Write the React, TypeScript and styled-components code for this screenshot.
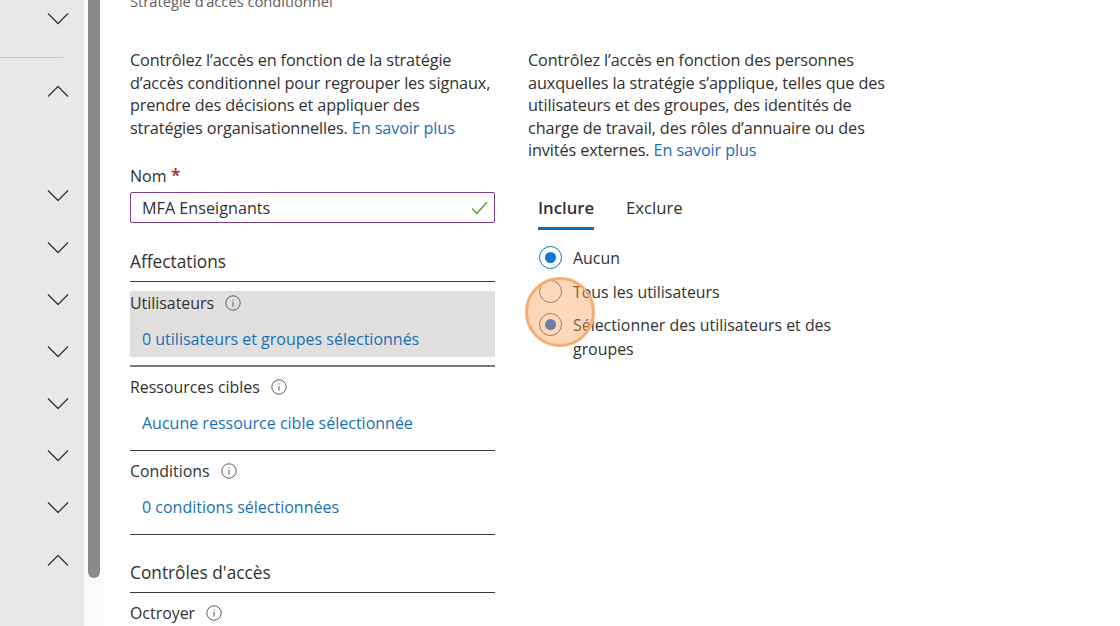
import React from "react";
import styled, { createGlobalStyle } from "styled-components";

const Global = createGlobalStyle`
html, body { margin: 0; padding: 0; background: #fff; }
body { font-family: "Open Sans", "Noto Sans", "Liberation Sans", sans-serif; color: #323130; }
`;

const chevrons = [
  { up: false, h: 25 },
  { up: true, h: 73 },
  { up: false, h: 104 },
  { up: false, h: 52 },
  { up: false, h: 52 },
  { up: false, h: 52 },
  { up: false, h: 52 },
  { up: false, h: 52 },
  { up: false, h: 52 },
  { up: true, h: 53 },
];

const Chevron = ({ up }: { up: boolean }) => (
  <svg width="22" height="13" viewBox="0 0 22 13" fill="none" stroke="#3b3a39" strokeWidth="1.4">
    <path d={up ? "M1 11.5 L11 1.5 L21 11.5" : "M1 1.5 L11 11.5 L21 1.5"} />
  </svg>
);

const Info = () => (
  <svg width="16" height="16" viewBox="0 0 16 16" fill="none" stroke="#605e5c">
    <circle cx="8" cy="8" r="7.2" strokeWidth="1" />
    <path d="M8 7 V11.6" strokeWidth="1.1" />
    <path d="M8 4.4 V5.6" strokeWidth="1.2" />
  </svg>
);

const CheckMark = () => (
  <svg width="17" height="14" viewBox="0 0 16 13" fill="none" stroke="#5ea32f" strokeWidth="1.4">
    <path d="M1 7 L5.5 11.5 L15 1" />
  </svg>
);

export default function App() {
  return (
    <Page>
      <Global />
      <Sidebar>
        {chevrons.map((c, i) => (
          <ChevronRow key={i} $h={c.h}>
            <Chevron up={c.up} />
          </ChevronRow>
        ))}
        <SideLine />
      </Sidebar>
      <Track>
        <Thumb />
      </Track>
      <Main>
        <Crumb>Stratégie d’accès conditionnel</Crumb>
        <Columns>
          <LeftCol>
            <Para>
              Contrôlez l’accès en fonction de la stratégie d’accès conditionnel pour regrouper les signaux, prendre des
              décisions et appliquer des stratégies organisationnelles. <Link>En savoir plus</Link>
            </Para>
            <FieldLabel>
              Nom <Star>*</Star>
            </FieldLabel>
            <NameInput>
              <span>MFA Enseignants</span>
              <CheckMark />
            </NameInput>
            <SectionTitle>Affectations</SectionTitle>
            <Rule />
            <ActiveBlock>
              <BlockLabel>
                Utilisateurs <Info />
              </BlockLabel>
              <BlockValue>0 utilisateurs et groupes sélectionnés</BlockValue>
            </ActiveBlock>
            <Rule $soft />
            <Block>
              <BlockLabel>
                Ressources cibles <Info />
              </BlockLabel>
              <BlockValue>Aucune ressource cible sélectionnée</BlockValue>
            </Block>
            <Rule />
            <Block>
              <BlockLabel>
                Conditions <Info />
              </BlockLabel>
              <BlockValue>0 conditions sélectionnées</BlockValue>
            </Block>
            <Rule />
            <SectionTitle $second>Contrôles d'accès</SectionTitle>
            <Rule />
            <Block>
              <BlockLabel>
                Octroyer <Info />
              </BlockLabel>
            </Block>
          </LeftCol>
          <RightCol>
            <Para>
              Contrôlez l’accès en fonction des personnes auxquelles la stratégie s’applique, telles que des utilisateurs
              et des groupes, des identités de charge de travail, des rôles d’annuaire ou des invités externes.{" "}
              <Link>En savoir plus</Link>
            </Para>
            <Tabs>
              <Tab $active>Inclure</Tab>
              <Tab>Exclure</Tab>
            </Tabs>
            <Radios>
              <RadioRow>
                <Radio $state="on" />
                <span>Aucun</span>
              </RadioRow>
              <RadioRow>
                <Radio />
                <span>Tous les utilisateurs</span>
              </RadioRow>
              <RadioRow>
                <Radio $state="pressed" />
                <span>Sélectionner des utilisateurs et des groupes</span>
              </RadioRow>
              <ClickMark />
            </Radios>
          </RightCol>
        </Columns>
      </Main>
    </Page>
  );
}

const Page = styled.div`
  width: 1120px;
  height: 626px;
  display: flex;
  overflow: hidden;
  background: #fff;
`;

const Sidebar = styled.div`
  width: 84px;
  flex: none;
  background: #e8e8e8;
  position: relative;
`;

const ChevronRow = styled.div<{ $h: number }>`
  height: ${(p) => p.$h}px;
  display: flex;
  justify-content: flex-end;
  align-items: flex-end;
  padding-right: 15px;
  box-sizing: border-box;
`;

const SideLine = styled.div`
  position: absolute;
  left: 0;
  top: 57px;
  width: 63px;
  height: 1px;
  background: #c8c6c4;
`;

const Track = styled.div`
  width: 20px;
  flex: none;
  background: #fafafa;
  padding-left: 4px;
  box-sizing: border-box;
`;

const Thumb = styled.div`
  width: 12px;
  height: 578px;
  background: #8a8a8a;
  border-radius: 0 0 6px 6px;
`;

const Main = styled.div`
  flex: 1;
  padding-left: 26px;
  margin-top: -8px;
`;

const Crumb = styled.div`
  font-size: 14.7px;
  line-height: 18px;
  color: #605e5c;
  height: 57px;
`;

const Columns = styled.div`
  display: flex;
  gap: 33px;
  align-items: flex-start;
`;

const LeftCol = styled.div`
  width: 365px;
  flex: none;
`;

const RightCol = styled.div`
  width: 364px;
  flex: none;
`;

const Para = styled.p`
  margin: 0;
  font-size: 16.25px;
  line-height: 22.6px;
  color: #323130;
  letter-spacing: -0.12px;
`;

const Link = styled.a`
  color: #1a6fb5;
`;

const FieldLabel = styled.div`
  margin-top: 26px;
  font-size: 16px;
  line-height: 22px;
`;

const Star = styled.span`
  color: #a4262c;
  font-size: 18px;
  font-weight: 600;
  line-height: 18px;
`;

const NameInput = styled.div`
  margin-top: 5px;
  height: 31px;
  box-sizing: border-box;
  border: 1px solid #7d3c98;
  border-radius: 2px;
  padding: 0 6px 0 11px;
  display: flex;
  align-items: center;
  justify-content: space-between;
  font-size: 16.2px;
`;

const SectionTitle = styled.div<{ $second?: boolean }>`
  margin-top: ${(p) => (p.$second ? 26 : 27)}px;
  height: 31px;
  font-size: 17.3px;
  line-height: 24px;
`;

const Rule = styled.div<{ $soft?: boolean }>`
  height: ${(p) => (p.$soft ? 2 : 1)}px;
  background: ${(p) => (p.$soft ? "#7a7a7a" : "#3b3a39")};
`;

const Block = styled.div`
  margin-top: 8px;
  height: 75px;
`;

const ActiveBlock = styled.div`
  margin: 9px 0 8px;
  height: 66px;
  background: #e1dfdd;
`;

const BlockLabel = styled.div`
  display: flex;
  align-items: center;
  gap: 11px;
  height: 23px;
  font-size: 15.9px;
`;

const BlockValue = styled.div`
  margin-top: 13px;
  padding-left: 12px;
  font-size: 16px;
  line-height: 24px;
  color: #1a6fb5;
`;

const Tabs = styled.div`
  margin: 30px 0 0 10px;
  display: flex;
  gap: 32px;
`;

const Tab = styled.div<{ $active?: boolean }>`
  height: 38px;
  box-sizing: border-box;
  padding-top: 4px;
  font-size: 16.7px;
  line-height: 24px;
  font-weight: ${(p) => (p.$active ? 600 : 400)};
  color: #323130;
  border-bottom: 3px solid ${(p) => (p.$active ? "#0f6cbd" : "transparent")};
`;

const Radios = styled.div`
  position: relative;
  margin: 16px 0 0 11px;
  width: 300px;
  display: flex;
  flex-direction: column;
  gap: 9.6px;
`;

const RadioRow = styled.div`
  display: flex;
  gap: 11px;
  font-size: 15.9px;
  line-height: 24px;
`;

const Radio = styled.div<{ $state?: "on" | "pressed" }>`
  width: 23px;
  height: 23px;
  flex: none;
  box-sizing: border-box;
  border-radius: 50%;
  border: 1px solid ${(p) => (p.$state === "on" ? "#0f6cbd" : "#605e5c")};
  display: flex;
  align-items: center;
  justify-content: center;
  &::after {
    content: "";
    width: 11px;
    height: 11px;
    border-radius: 50%;
    background: ${(p) => (p.$state === "on" ? "#0f78d4" : p.$state === "pressed" ? "#006ce0" : "transparent")};
  }
`;

const ClickMark = styled.div`
  position: absolute;
  left: -14px;
  top: 31px;
  width: 70px;
  height: 70px;
  box-sizing: border-box;
  border-radius: 50%;
  background: rgba(247, 160, 90, 0.42);
  border: 3px solid #f6ad6e;
`;
